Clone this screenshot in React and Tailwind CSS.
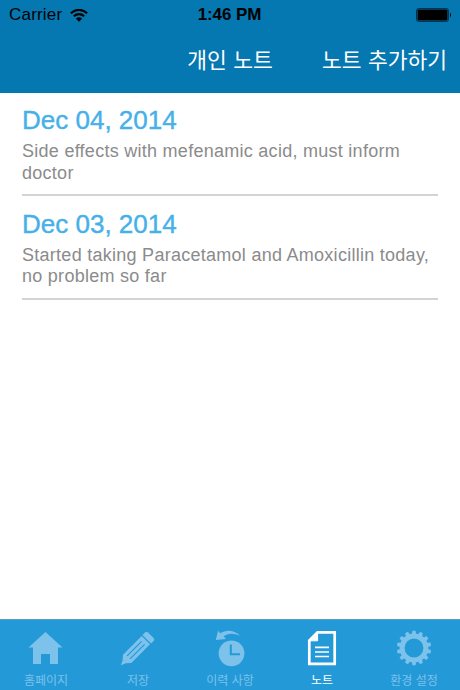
import React from 'react';

const NOTES = [
  {
    id: 1,
    date: 'Dec 04, 2014',
    lines: ['Side effects with mefenamic acid, must inform', 'doctor'],
  },
  {
    id: 2,
    date: 'Dec 03, 2014',
    lines: ['Started taking Paracetamol and Amoxicillin today,', 'no problem so far'],
  },
];

const TEETH = Array.from({ length: 14 }, (_, i) => (i * 360) / 14);

const HomeIcon = () => (
  <svg width="36" height="36" viewBox="0 0 36 36" fill="currentColor">
    <path d="M17.5 2 34.5 17.5H30V34H22V24H13V34H5V17.5H.5Z" />
  </svg>
);

const PencilIcon = () => (
  <svg className="overflow-visible" width="36" height="36" viewBox="0 0 36 36">
    <g transform="translate(.8 35.2) rotate(-45)">
      <path d="M0 0 5.6-2.6V2.6Z" fill="currentColor" />
      <path d="M9-5.9H35.4V5.9H9L5.2 2.6V-2.6Z" fill="currentColor" />
      <path d="M36.6-6H40.4Q42.4-6 42.4-4V4Q42.4 6 40.4 6H36.6Z" fill="currentColor" />
      <path d="M11-2.1H31.5M11 2.1H31.5" stroke="#2499d8" strokeWidth="1.2" fill="none" />
    </g>
  </svg>
);

const HistoryIcon = () => (
  <svg className="overflow-visible" width="36" height="36" viewBox="0 0 36 36">
    <circle cx="19.5" cy="23.3" r="12.9" fill="currentColor" />
    <path d="M18.8 14.5V24.2H28" stroke="#2499d8" strokeWidth="2" fill="none" />
    <path
      d="M3.8 10 6 .8 8.3 3.3C14-.8 22.5-.2 28 5.8 22 3 15.5 3 11.7 6.3L14 9Z"
      fill="currentColor"
    />
  </svg>
);

const NoteIcon = () => (
  <svg width="36" height="36" viewBox="0 0 36 36" fill="none" stroke="currentColor">
    <path d="M13.5 2.4H30.7V33.8H5.3V10.6Z" strokeWidth="2.7" />
    <path d="M13.6 2V10.8H5Z" fill="currentColor" strokeWidth="1" />
    <path d="M11 17.4H25M11 22H25M11 26.5H25" strokeWidth="1.7" />
  </svg>
);

const GearIcon = () => (
  <svg width="36" height="36" viewBox="0 0 36 36">
    <circle cx="18" cy="18" r="11.9" fill="none" stroke="currentColor" strokeWidth="5" />
    {TEETH.map((angle) => (
      <path
        key={angle}
        d="M15.7 5.5 16.4 .8H19.6L20.3 5.5Z"
        fill="currentColor"
        transform={`rotate(${angle} 18 18)`}
      />
    ))}
  </svg>
);

const TABS = [
  { label: '홈페이지', Icon: HomeIcon },
  { label: '저장', Icon: PencilIcon },
  { label: '이력 사항', Icon: HistoryIcon },
  { label: '노트', Icon: NoteIcon, active: true },
  { label: '환경 설정', Icon: GearIcon },
];

const StatusBar = () => (
  <div className="grid h-[30px] grid-cols-3 items-center pl-[9px] pr-2 text-black">
    <div className="flex items-center gap-[8px]">
      <span className="text-[17px] tracking-[0.2px]">Carrier</span>
      <svg width="18" height="13" viewBox="0 0 18 13" fill="none" stroke="currentColor">
        <path d="M.9 4.3C5.5-.3 12.5-.3 17.1 4.3" strokeWidth="2.1" />
        <path d="M3.8 7.2C6.8 4.4 11.2 4.4 14.2 7.2" strokeWidth="2.1" />
        <path d="M9 12.8 5.8 9.5Q9 7 12.2 9.5Z" fill="currentColor" stroke="none" />
      </svg>
    </div>
    <div className="-ml-[2px] text-center text-[17px] font-bold tracking-[-0.1px]">1:46 PM</div>
    <div className="flex justify-end">
      <svg width="36" height="14" viewBox="0 0 36 14">
        <rect x=".5" y=".5" width="32" height="13" rx="2" fill="none" stroke="#033450" />
        <rect x="1.5" y="1.5" width="30" height="11" rx="1" />
        <path d="M34 4.5Q36 7 34 9.5Z" />
      </svg>
    </div>
  </div>
);

const NoteItem = ({ note }) => (
  <li className="h-[103.5px] border-b-2 border-[#d4d4d4] pt-[11.5px]">
    <h2 className="text-[26px] leading-[32px] text-[#46b1e8] [-webkit-text-stroke:0.4px_#46b1e8]">
      {note.date}
    </h2>
    <p className="mt-[5px] text-[18px] leading-[21.5px] tracking-[0.27px] whitespace-nowrap text-[#8b8b8b]">
      {note.lines[0]}
      <br />
      {note.lines[1]}
    </p>
  </li>
);

const App = () => {
  return (
    <div className="flex h-[690px] w-[460px] flex-col overflow-hidden bg-white font-['Liberation_Sans','Noto_Sans_CJK_KR',sans-serif]">
      <header className="h-[92.5px] bg-[#0577b1]">
        <StatusBar />
        <div className="grid h-[59px] grid-cols-[1fr_auto_1fr] items-center pr-[13px] pl-[13px] text-[21.5px] text-white font-['Noto_Sans_CJK_KR',sans-serif]">
          <span />
          <h1 className="whitespace-nowrap [word-spacing:1.5px]">개인 노트</h1>
          <button type="button" className="text-right whitespace-nowrap [word-spacing:1.5px]">
            노트 추가하기
          </button>
        </div>
      </header>

      <ul className="flex-1 px-[22px]">
        {NOTES.map((note) => (
          <NoteItem key={note.id} note={note} />
        ))}
      </ul>

      <nav className="grid h-[71.5px] grid-cols-5 border-t border-[#5c9fc4] bg-[#2499d8]">
        {TABS.map(({ label, Icon, active }) => (
          <button
            key={label}
            type="button"
            className={`flex flex-col items-center pt-[10.5px] ${active ? 'text-white' : 'text-[#7cc2ea]'}`}
          >
            <Icon />
            <span className="mt-[6px] text-[12px] leading-[18px] whitespace-nowrap">{label}</span>
          </button>
        ))}
      </nav>
    </div>
  );
};

export default App;
